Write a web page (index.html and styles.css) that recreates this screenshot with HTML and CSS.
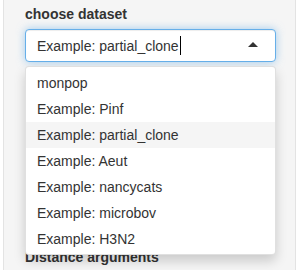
FILE: index.html
```html
<!DOCTYPE html>
<html lang="en">
  <head>
    <meta charset="UTF-8" />
    <meta name="viewport" content="width=device-width, initial-scale=1.0" />
    <title>choose dataset</title>
    <link rel="stylesheet" href="styles.css">
  </head>
  <body>
    <div class="well">
      <div class="form-group">
        <label class="control-label" for="dataset">choose dataset</label>
        <div class="selectize">
          <div class="selectize-input">
            <span class="item">Example: partial_clone</span>
            <span class="cursor"></span>
            <span class="arrow"></span>
          </div>
          <div class="selectize-dropdown">
            <div class="option">monpop</div>
            <div class="option">Example: Pinf</div>
            <div class="option active">Example: partial_clone</div>
            <div class="option">Example: Aeut</div>
            <div class="option">Example: nancycats</div>
            <div class="option">Example: microbov</div>
            <div class="option">Example: H3N2</div>
          </div>
        </div>
      </div>
      <label class="control-label section">Distance arguments</label>
    </div>
  </body>
</html>
```

FILE: styles.css
```css
* {
  padding: 0;
  margin: 0;
  box-sizing: border-box;
}
html,
body {
  overflow: hidden;
}
body {
  font-family: "Liberation Sans", Arial, sans-serif;
  font-size: 14px;
  line-height: 20px;
  color: #333;
  background: #fff;
  height: 270px;
}
.well {
  margin: -20px 0 0 3px;
  width: 293px;
  height: 290px;
  padding: 23px 19px 0 21px;
  background: #f5f5f5;
  border: 1px solid #e3e3e3;
  border-bottom: 0;
  border-radius: 4px 4px 0 0;
}
.control-label {
  display: block;
  font-weight: bold;
  margin-bottom: 5px;
}
.selectize {
  position: relative;
  width: 251px;
}
.selectize-input {
  display: flex;
  align-items: center;
  height: 33px;
  padding: 0 11px;
  background: #fff;
  border: 1px solid #66afe9;
  border-radius: 4px;
  box-shadow: inset 0 1px 1px rgba(0, 0, 0, 0.075), 0 0 8px rgba(102, 175, 233, 0.6);
  position: relative;
}
.item {
  white-space: nowrap;
  color: #333;
}
.cursor {
  display: inline-block;
  width: 1px;
  height: 19px;
  background: #000;
  margin-left: 1px;
}
.arrow {
  position: absolute;
  right: 17px;
  top: 12px;
  width: 0;
  height: 0;
  border-left: 5px solid transparent;
  border-right: 5px solid transparent;
  border-bottom: 5px solid #333;
}
.selectize-dropdown {
  position: absolute;
  top: 37px;
  left: 0;
  width: 251px;
  padding: 3px 0 2px;
  background: #fff;
  border: 1px solid rgba(0, 0, 0, 0.12);
  border-radius: 4px;
  box-shadow: 0 6px 12px rgba(0, 0, 0, 0.175);
  z-index: 10;
}
.option {
  padding: 3px 11px;
  line-height: 20px;
  white-space: nowrap;
}
.option.active {
  background: #f5f5f5;
}
.section {
  margin-top: 185px;
}
```
